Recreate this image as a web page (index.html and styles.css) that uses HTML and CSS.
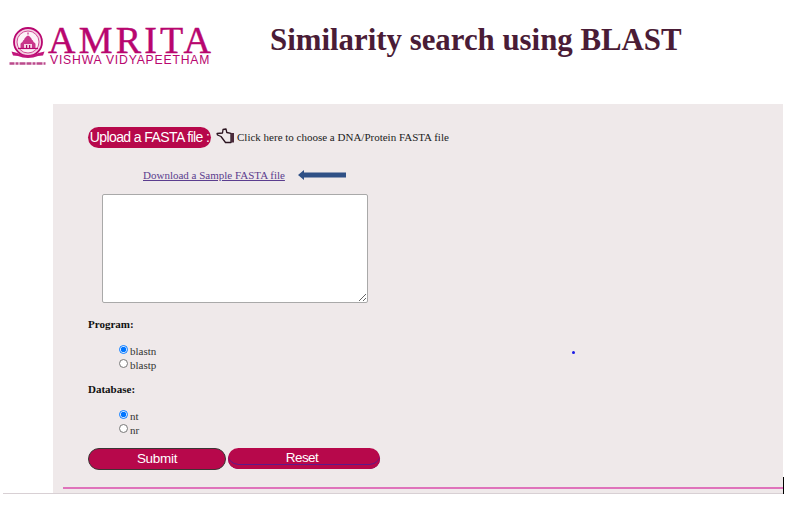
FILE: index.html
```html
<!DOCTYPE html>
<html lang="en">
<head>
<meta charset="utf-8">
<title>Similarity search using BLAST</title>
<link rel="stylesheet" href="styles.css">
</head>
<body>
<header class="header">
  <div class="logo">
    <svg class="emblem" width="40" height="42" viewBox="0 0 40 42" aria-hidden="true">
      <circle cx="19" cy="16" r="14" fill="#f5cfe3" stroke="#b8066f" stroke-width="1.800"/>
      <circle cx="19" cy="16" r="11" fill="#fdf3f8" stroke="#cf4f96" stroke-width="1"/>
      <path d="M19 6.500v2" stroke="#b8066f" stroke-width="1"/>
      <path d="M11.500 22v-3.500c0-1.500 1-2 2-2.500.5-1.500 1-2 1.500-2 .5-2 2-3.500 4-4.500 2 1 3.500 2.500 4 4.500.5 0 1 .5 1.500 2 1 .5 2 1 2 2.500V22z" fill="#c9368a"/>
      <path d="M15 22v-4h8v4z" fill="#f6d5e6"/>
      <path d="M17 22v-3h1.200v3zM20 22v-3h1.200v3z" fill="#a80a64"/>
      <path d="M9 22.500h20" stroke="#b8066f" stroke-width="1.200"/>
      <path d="M2.500 25.500l6 1.500c6 3 15 3 21 0l6-1.500-1.500 4-5 .5c-6 2.500-14 2.500-20 0l-5-.5z" fill="#c2167c"/>
      <path d="M0.500 37.500h36" stroke="#bb4a8c" stroke-width="2.500" stroke-dasharray="5 1 3 1 6 1"/>
    </svg>
    <div class="wordmark">
      <div class="wordmark-main">AMRITA</div>
      <div class="wordmark-sub">VISHWA VIDYAPEETHAM</div>
    </div>
  </div>
  <h1 class="title">Similarity search using BLAST</h1>
</header>
<main class="panel">
  <form class="form">
    <div class="upload-row">
      <span class="pill">Upload a FASTA file :</span>
      <svg class="hand" width="19" height="17" viewBox="0 0 19 17" aria-hidden="true">
        <path d="M1 5.500 6.500 5 7 1.500 10 1l.8 3.500 4.200.8v9.200H9.500L6.500 10.500 5 8.500 1.500 7z" fill="none" stroke="#2b1420" stroke-width="1.300" stroke-linejoin="round"/>
        <path d="M15 5h3v9.500h-3z" fill="#4a2a3a"/>
      </svg>
      <span class="upload-hint">Click here to choose a DNA/Protein FASTA file</span>
    </div>
    <div class="sample-row">
      <a class="sample-link" href="#">Download a Sample FASTA file</a>
      <svg class="arrow" width="48" height="12" viewBox="0 0 48 12" aria-hidden="true">
        <path d="M0 6 6 1v2.500h42v5H6V11z" fill="#2f5086"/>
      </svg>
    </div>
    <textarea class="sequence"></textarea>
    <h2 class="label label-program">Program:</h2>
    <div class="options">
      <label class="option"><input type="radio" name="program" checked>blastn</label>
      <label class="option"><input type="radio" name="program">blastp</label>
    </div>
    <h2 class="label label-database">Database:</h2>
    <div class="options">
      <label class="option"><input type="radio" name="database" checked>nt</label>
      <label class="option"><input type="radio" name="database">nr</label>
    </div>
    <div class="buttons">
      <button type="submit" class="btn btn-submit">Submit</button>
      <button type="reset" class="btn btn-reset">Reset</button>
    </div>
  </form>
  <span class="dot"></span>
  <hr class="rule">
  <span class="tick"></span>
</main>
<div class="bottom-line"></div>
</body>
</html>
```
FILE: styles.css
```css
* {
  box-sizing: border-box;
}

html,
body {
  margin: 0;
  padding: 0;
  background: #fff;
}

body {
  width: 798px;
  height: 508px;
  overflow: hidden;
  font-family: "Liberation Serif", serif;
  color: #1c1c1c;
}

.header {
  height: 104px;
  display: flex;
  align-items: flex-start;
}

.logo {
  display: flex;
  align-items: flex-start;
  margin: 26px 0 0 9px;
  width: 261px;
  color: #b8066f;
}

.emblem {
  flex: none;
  margin-right: 1px;
}

.wordmark-main {
  margin-left: -2px;
  font-family: "Liberation Serif", serif;
  font-size: 38px;
  line-height: 28px;
  letter-spacing: 3.200px;
  -webkit-text-stroke: 0.400px #b8066f;
  white-space: nowrap;
}

.wordmark-sub {
  font-family: "Liberation Sans", sans-serif;
  font-size: 12.200px;
  line-height: 13px;
  letter-spacing: 0.800px;
  white-space: nowrap;
}

.title {
  margin: 21px 0 0;
  font-size: 30.850px;
  line-height: 38px;
  font-weight: 700;
  color: #4a1c36;
  white-space: nowrap;
}

.panel {
  position: relative;
  width: 730px;
  height: 389px;
  margin-left: 53px;
  background: #efe9ea;
}

.form {
  padding: 23px 0 0 35px;
}

.upload-row {
  display: flex;
  align-items: flex-start;
  height: 21px;
}

.pill {
  width: 123px;
  height: 21px;
  border-radius: 11px;
  background: #b7084b;
  color: #fff;
  font-family: "Liberation Sans", sans-serif;
  font-size: 14px;
  letter-spacing: -0.600px;
  line-height: 20px;
  text-align: center;
  white-space: nowrap;
}

.hand {
  margin: 1px 0 0 5px;
  flex: none;
}

.upload-hint {
  margin: 3px 0 0 2px;
  font-size: 11px;
  line-height: 15px;
  white-space: nowrap;
}

.sample-row {
  display: flex;
  align-items: center;
  height: 14px;
  margin: 20px 0 0 55px;
}

.sample-link {
  font-size: 11px;
  line-height: 14px;
  color: #5b3d8e;
  white-space: nowrap;
  width: 155px;
}

.arrow {
  flex: none;
}

.sequence {
  display: block;
  width: 266px;
  height: 109px;
  margin: 12px 0 0 14px;
  padding: 2px;
  background: #fff;
  border: 1px solid #a9a9a9;
  border-radius: 2px;
}

.label {
  margin: 0;
  font-size: 11px;
  line-height: 14px;
  font-weight: 700;
  color: #111;
}

.label-program {
  margin-top: 14px;
}

.label-database {
  margin-top: 10px;
}

.options {
  display: flex;
  flex-direction: column;
  margin: 13px 0 0 31px;
}

.option {
  display: flex;
  align-items: center;
  height: 14px;
  font-size: 11px;
  line-height: 14px;
  color: #333;
}

.option input {
  width: 9px;
  height: 9px;
  margin: 0 2px 3px 0;
}

.buttons {
  display: flex;
  gap: 2px;
  margin-top: 11px;
}

.btn {
  height: 22px;
  padding: 0;
  border-radius: 11px;
  background: #b7084b;
  color: #fff;
  font-family: "Liberation Sans", sans-serif;
  line-height: 18px;
}

.btn-submit {
  width: 138px;
  border: 1px solid #3c3535;
  font-size: 13.500px;
  letter-spacing: -0.300px;
}

.btn-reset {
  width: 152px;
  height: 21px;
  border: 0;
  padding: 0 4px 1px 0;
  font-size: 13.500px;
  letter-spacing: -0.600px;
  box-shadow: inset 0 -4px 0 #b7084b, inset 0 -5px 0 #5e1a8a;
}

.dot {
  position: absolute;
  left: 519px;
  top: 247px;
  width: 3px;
  height: 3px;
  border-radius: 50%;
  background: #1a1ae6;
}

.rule {
  position: absolute;
  left: 10px;
  right: 0;
  top: 383px;
  margin: 0;
  height: 2px;
  border: 0;
  background: #df73bb;
}

.tick {
  position: absolute;
  left: 730px;
  top: 373px;
  width: 1px;
  height: 17px;
  background: #000;
}

.bottom-line {
  width: 780px;
  height: 1px;
  margin-left: 3px;
  background: #d8d0d4;
}
```
